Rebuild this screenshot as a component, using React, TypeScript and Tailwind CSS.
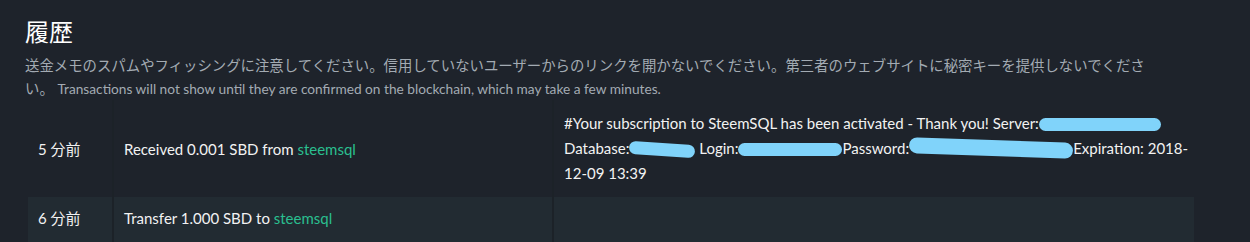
import React from "react";

const font = {
  fontFamily: "Lato, 'Noto Sans CJK JP', sans-serif",
};

function Blob({ w, className = "" }: { w: number; className?: string }) {
  return (
    <span
      className={"inline-block h-[13px] rounded-full bg-[#80d3fa] align-[-2px] " + className}
      style={{ width: w }}
    />
  );
}

function Link({ children }: { children: React.ReactNode }) {
  return <span className="text-[#2abf8f]">{children}</span>;
}

export default function App() {
  return (
    <div
      className="min-h-screen bg-[#1e232b] pl-[25px] pt-[16px] text-[#f2f2f2]"
      style={font}
    >
      <h2 className="text-[24px] leading-[32px] text-white">履歴</h2>
      <p className="mt-[6px] w-[1132px] text-[14.4px] leading-[23px] text-[#a3abb3]">
        送金メモのスパムやフィッシングに注意してください。信用していないユーザーからのリンクを開かないでください。第三者のウェブサイトに秘密キーを提供しないでください。{" "}
        <span className="text-[13.7px]">
          Transactions will not show until they are confirmed on the blockchain, which may take a few minutes.
        </span>
      </p>

      <div className="ml-[3px] w-[1166px] text-[15px] leading-[25px]">
        <div className="flex">
          <div className="flex w-[86px] items-center border-r-2 border-[#1c2228] px-[10px] pt-[1px]">5 分前</div>
          <div className="flex w-[440px] items-center border-r-2 border-[#1c2228] px-[10px] pt-[1px]">
            <span>
              Received 0.001 SBD from <Link>steemsql</Link>
            </span>
          </div>
          <div className="w-[640px] whitespace-nowrap px-[10px] py-[11px]">
            #Your subscription to SteemSQL has been activated - Thank you! Server:
            <Blob w={122} />
            <br />
            Database:
            <Blob w={66} className="rotate-[4deg]" /> Login:
            <Blob w={104} />
            Password:
            <Blob w={164} className="h-[16px] rotate-[2deg]" />
            Expiration: 2018-
            <br />
            12-09 13:39
          </div>
        </div>

        <div className="flex h-[50px] bg-[#222b32]">
          <div className="w-[86px] border-r-2 border-[#1c2228] px-[10px] pt-[9px]">6 分前</div>
          <div className="w-[440px] border-r-2 border-[#1c2228] px-[10px] pt-[9px]">
            Transfer 1.000 SBD to <Link>steemsql</Link>
          </div>
          <div className="w-[640px] px-[10px] pt-[9px]" />
        </div>
      </div>
    </div>
  );
}
